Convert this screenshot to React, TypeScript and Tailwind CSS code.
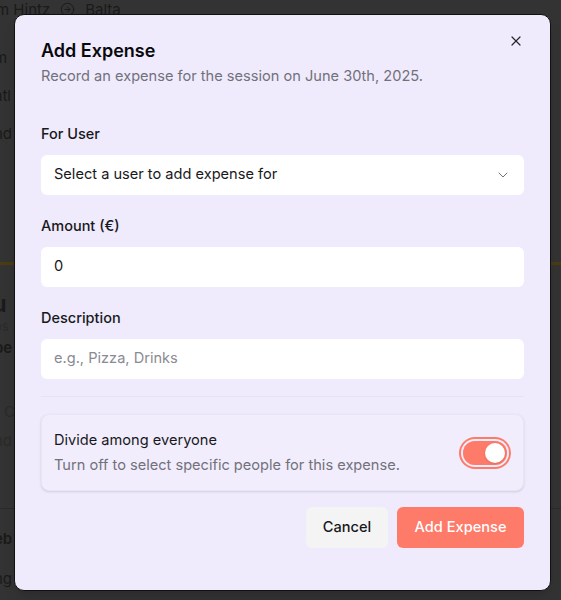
import React from 'react';
import { ChevronDown, CircleArrowRight, X } from 'lucide-react';

function Background() {
  return (
    <div className="absolute inset-0 bg-[#333333] text-[#1a1a1a] text-[15px] leading-none">
      <div className="absolute left-[-4px] top-[2px] flex items-center gap-[10px]">
        <span>m Hintz</span>
        <CircleArrowRight className="w-[15px] h-[15px]" strokeWidth={1.5} />
        <span>Balta</span>
      </div>
      <div className="absolute left-[-6px] top-[50px]">m</div>
      <div className="absolute left-[-6px] top-[88px]">atl</div>
      <div className="absolute left-[-6px] top-[126px]">nd</div>
      <div className="absolute left-0 right-0 top-[262px] h-[3px] bg-[#4a3c10]" />
      <div className="absolute left-[-8px] top-[292px] text-[24px] font-semibold">u</div>
      <div className="absolute left-[-6px] top-[320px] text-[13px] text-[#2a2a2a]">os</div>
      <div className="absolute left-[-6px] top-[340px] font-semibold">pe</div>
      <div className="absolute left-[4px] top-[404px] text-[#2a2a2a]">C</div>
      <div className="absolute left-[-6px] top-[433px] text-[#2a2a2a]">nd</div>
      <div className="absolute left-0 right-0 top-[508px] h-px bg-[#2a2a2a]" />
      <div className="absolute left-[-6px] top-[531px] font-semibold">eb</div>
      <div className="absolute left-[-6px] top-[571px]">ng</div>
    </div>
  );
}

function Field({ label, children }: { label: string; children: React.ReactNode }) {
  return (
    <div className="flex flex-col gap-[11px]">
      <label className="text-[14.5px] font-medium text-[#18181b] leading-5">{label}</label>
      {children}
    </div>
  );
}

export default function App() {
  return (
    <div
      className="relative w-[561px] h-[600px] overflow-hidden"
      style={{ fontFamily: 'Inter, "Noto Sans", sans-serif' }}
    >
      <Background />
      <div className="absolute left-[14px] top-[14px] w-[537px] h-[577px] rounded-[10px] border border-[#111111] bg-[#efebfd] shadow-lg">
        <button className="absolute right-[26px] top-[18px] text-[#27272a]">
          <X className="w-4 h-4" strokeWidth={1.8} />
        </button>
        <div className="px-[26px] pt-[24px]">
          <h2 className="text-[18px] font-semibold text-[#09090b] leading-6">Add Expense</h2>
          <p className="mt-[3px] text-[14.6px] text-[#71717a] leading-5">
            Record an expense for the session on June 30th, 2025.
          </p>

          <div className="mt-[38px] flex flex-col gap-[21px]">
            <Field label="For User">
              <div className="h-[40px] rounded-[6px] bg-white flex items-center justify-between px-[13px]">
                <span className="text-[14.6px] text-[#18181b]">Select a user to add expense for</span>
                <ChevronDown className="w-4 h-4 text-[#71717a]" strokeWidth={1.5} />
              </div>
            </Field>
            <Field label="Amount (€)">
              <div className="h-[40px] rounded-[6px] bg-white flex items-center px-[13px]">
                <span className="text-[14.6px] text-[#18181b]">0</span>
              </div>
            </Field>
            <Field label="Description">
              <div className="h-[40px] rounded-[6px] bg-white flex items-center px-[13px]">
                <span className="text-[14.6px] text-[#8a8a93]">e.g., Pizza, Drinks</span>
              </div>
            </Field>
          </div>

          <div className="mt-[17px] border-t border-[#e6e2f3]" />

          <div className="mt-[17px] rounded-[8px] border border-[#e9e5f6] bg-[#f1edfd] shadow-sm px-[12px] py-[15px] flex items-center justify-between">
            <div className="flex flex-col gap-[5px]">
              <span className="text-[14.6px] text-[#18181b] leading-5">Divide among everyone</span>
              <span className="text-[14.6px] text-[#71717a] leading-5">
                Turn off to select specific people for this expense.
              </span>
            </div>
            <div className="mr-[4px] rounded-full ring-2 ring-[#fe7a69] ring-offset-2 ring-offset-[#f1edfd]">
              <div className="w-[44px] h-[24px] rounded-full bg-[#fe7a69] flex items-center justify-end px-[2px]">
                <div className="w-[20px] h-[20px] rounded-full bg-white shadow" />
              </div>
            </div>
          </div>

          <div className="mt-[16px] flex justify-end gap-[9px]">
            <button className="h-[41px] w-[82px] rounded-[6px] bg-[#f4f4f5] text-[14.6px] font-medium text-[#18181b]">
              Cancel
            </button>
            <button className="h-[41px] w-[127px] rounded-[6px] bg-[#fe7a69] text-[14.6px] font-medium text-white">
              Add Expense
            </button>
          </div>
        </div>
      </div>
    </div>
  );
}
